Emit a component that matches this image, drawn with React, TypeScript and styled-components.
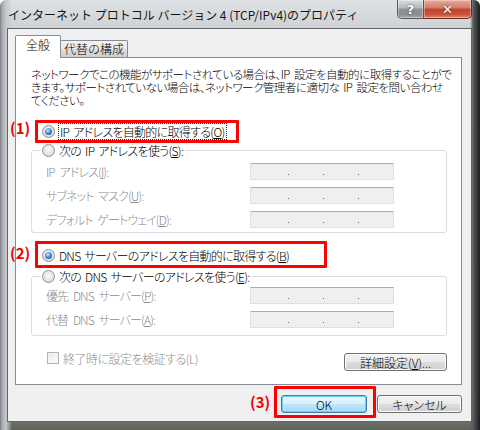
import React from 'react';
import styled, { createGlobalStyle } from 'styled-components';

const GlobalStyle = createGlobalStyle`
  html, body {
    margin: 0;
    padding: 0;
    background: #fff;
  }
  body {
    font-family: "Noto Sans CJK JP", "Liberation Sans", sans-serif;
    font-size: 12px;
    font-weight: 300;
    color: #000;
  }
  * {
    box-sizing: border-box;
  }
`;

const Window = styled.div`
  width: 480px;
  height: 430px;
  display: flex;
  flex-direction: column;
  padding: 0 8px 8px 7px;
  border-radius: 6px 6px 0 0;
  background:
    linear-gradient(to right, #7a7e82 0, #a6aaae 2px, #c6c9cc 6px, rgba(208, 211, 214, 0) 12px),
    linear-gradient(to left, #1e1e1e 0, #3e4042 4px, #5a5c5e 7px, rgba(90, 92, 94, 0) 10px),
    linear-gradient(to bottom, #dfe2e5 0, #cfd2d5 28px, #b8bbbe 380px, #5e6158 100%);
`;

const TitleBar = styled.div`
  height: 28px;
  flex-shrink: 0;
  display: flex;
  align-items: flex-start;
`;

const Title = styled.div`
  padding: 6px 0 0 1px;
  font-size: 12px;
  font-weight: 400;
  color: #151515;
  white-space: nowrap;
`;

const CaptionButtons = styled.div`
  margin-left: auto;
  display: flex;
  height: 19px;
`;

const CaptionButton = styled.div<{ $close?: boolean }>`
  width: ${p => (p.$close ? '48px' : '27px')};
  height: 19px;
  display: flex;
  align-items: center;
  justify-content: center;
  color: #fff;
  font-family: "DejaVu Sans", sans-serif;
  font-weight: bold;
  font-size: 13px;
  text-shadow: 0 0 2px #333;
  border: 1px solid ${p => (p.$close ? '#6b2a20' : '#55595d')};
  border-top: none;
  border-left: ${p => (p.$close ? 'none' : '1px solid #55595d')};
  border-radius: ${p => (p.$close ? '0 0 5px 0' : '0 0 0 5px')};
  background: ${p =>
    p.$close
      ? 'linear-gradient(to bottom, #e9a99b 0, #d47a66 45%, #c1452b 50%, #c9513a 80%, #e08a6f 100%)'
      : 'linear-gradient(to bottom, #d9dbdd 0, #b5b8bb 45%, #8e9195 50%, #8a8d90 80%, #a9acaf 100%)'};
  box-shadow: inset 0 0 0 1px rgba(255, 255, 255, 0.35);
`;

const Client = styled.div`
  flex: 1;
  display: flex;
  flex-direction: column;
  background: #f0f0f0;
  border: 1px solid #62666a;
  padding: 6px 9px 0 7px;
`;

const TabRow = styled.div`
  display: flex;
  align-items: flex-end;
  height: 23px;
  margin-bottom: -1px;
  position: relative;
  z-index: 1;
`;

const Tab = styled.div<{ $active?: boolean }>`
  height: ${p => (p.$active ? '23px' : '17px')};
  margin-bottom: ${p => (p.$active ? '0' : '1px')};
  margin-left: ${p => (p.$active ? '0' : '-1px')};
  padding: ${p => (p.$active ? '1px 10px 0' : '0 3px')};
  display: flex;
  align-items: ${p => (p.$active ? 'flex-start' : 'center')};
  border: 1px solid #898c95;
  border-bottom: none;
  border-radius: 2px 2px 0 0;
  background: ${p =>
    p.$active ? '#fff' : 'linear-gradient(to bottom, #f2f2f2 0, #ebebeb 50%, #dddddd 51%, #cfcfcf 100%)'};
  font-size: 12px;
  line-height: 16px;
  white-space: nowrap;
`;

const Panel = styled.div`
  background: #fff;
  border: 1px solid #898c95;
  padding: 10px 14px 13px 15px;
  display: flex;
  flex-direction: column;
`;

const Description = styled.p`
  margin: 0;
  font-size: 11.5px;
  line-height: 13px;
  letter-spacing: -0.5px;
  word-spacing: 2px;
  font-feature-settings: "palt" 1;
  white-space: nowrap;
`;

const RadioRow = styled.div<{ $indent?: number; $top?: number }>`
  position: relative;
  display: flex;
  align-items: center;
  gap: 4px;
  height: 18px;
  padding-left: ${p => p.$indent ?? 0}px;
  margin-top: ${p => p.$top ?? 0}px;
  letter-spacing: -0.7px;
  word-spacing: 2px;
  font-feature-settings: "palt" 1;
  white-space: nowrap;
`;

const RadioDot = styled.span<{ $on?: boolean }>`
  width: 13px;
  height: 13px;
  flex-shrink: 0;
  border-radius: 50%;
  border: 1px solid #8d8f91;
  background: radial-gradient(circle at 50% 40%, #fbfbfb 0, #e4e4e4 55%, #cdcdcd 100%);
  display: inline-flex;
  align-items: center;
  justify-content: center;

  &::after {
    content: '';
    display: ${p => (p.$on ? 'block' : 'none')};
    width: 7px;
    height: 7px;
    border-radius: 50%;
    background: radial-gradient(circle at 40% 35%, #c4ecff 0, #3f93dc 45%, #0d3f8c 100%);
  }
`;

const FocusLabel = styled.span`
  outline: 1px dotted #222;
  padding: 0 1px;
  line-height: 15px;
`;

const Group = styled.fieldset<{ $top?: number; $bottom?: number }>`
  margin: ${p => p.$top ?? 0}px 0 0 0;
  padding: 0 0 ${p => p.$bottom ?? 4}px 0;
  border: 1px solid #d5dfe5;
  border-radius: 3px;
  min-width: 0;
`;

const Legend = styled.legend`
  margin-left: 9px;
  padding: 0 2px 0 1px;
`;

const FieldRow = styled.div<{ $top: number }>`
  display: flex;
  align-items: center;
  height: 17px;
  margin-top: ${p => p.$top}px;
  padding-left: 14px;
`;

const FieldLabel = styled.span`
  width: 204px;
  color: #8d8d8d;
  letter-spacing: -0.9px;
  word-spacing: 3px;
  font-feature-settings: "palt" 1;
  white-space: nowrap;
`;

const IpBox = styled.div`
  width: 144px;
  height: 17px;
  display: flex;
  align-items: flex-end;
  padding: 0 0 4px 37px;
  background: #efefef;
  border: 1px solid #dcdfe3;
  border-top-color: #abadb3;
`;

const IpDot = styled.span`
  width: 1px;
  height: 1px;
  margin-right: 34px;
  background: #6d6d6d;
`;

const BottomRow = styled.div`
  display: flex;
  align-items: center;
  justify-content: space-between;
  height: 18px;
  margin-top: 17px;
`;

const CheckItem = styled.div`
  display: flex;
  align-items: center;
  gap: 4px;
  padding-left: 16px;
  margin-bottom: 8px;
  color: #8d8d8d;
  letter-spacing: -0.5px;
  font-feature-settings: "palt" 1;
  white-space: nowrap;
`;

const CheckBox = styled.span`
  width: 12px;
  height: 12px;
  border: 1px solid #b4b4b4;
  background: linear-gradient(135deg, #e6e6e6 0, #f6f6f6 60%, #fdfdfd 100%);
  box-shadow: inset 0 0 0 1px #f4f4f4;
`;

const Button = styled.div<{ $w: number; $default?: boolean }>`
  position: relative;
  width: ${p => p.$w}px;
  height: 18px;
  display: flex;
  align-items: center;
  justify-content: center;
  font-size: 12px;
  font-feature-settings: "palt" 1;
  white-space: nowrap;
  border-radius: 3px;
  border: 1px solid ${p => (p.$default ? '#3c7fb1' : '#707070')};
  background: ${p =>
    p.$default
      ? 'linear-gradient(to bottom, #eaf6fd 0, #d9f0fc 50%, #bee6fd 51%, #a7d9f5 100%)'
      : 'linear-gradient(to bottom, #f2f2f2 0, #ebebeb 50%, #dddddd 51%, #cfcfcf 100%)'};
  box-shadow: inset 0 0 0 1px ${p => (p.$default ? '#6ccff7' : '#fcfcfc')};
`;

const Footer = styled.div`
  display: flex;
  justify-content: flex-end;
  gap: 10px;
  padding-top: 10px;
`;

/* red annotation frames laid over the captured dialog */
const RedFrame = styled.div<{ $top: number; $left: number; $w: number; $h: number }>`
  position: absolute;
  top: ${p => p.$top}px;
  left: ${p => p.$left}px;
  width: ${p => p.$w}px;
  height: ${p => p.$h}px;
  border: 3px solid #ff0000;
  border-radius: 1px;
  pointer-events: none;
`;

const Tag = styled.span<{ $top: number; $left: number }>`
  position: absolute;
  top: ${p => p.$top}px;
  left: ${p => p.$left}px;
  color: #f20000;
  font-weight: bold;
  font-size: 15px;
  line-height: 15px;
  letter-spacing: 0;
  word-spacing: 0;
  white-space: nowrap;
`;

function IpField() {
  return (
    <IpBox>
      <IpDot />
      <IpDot />
      <IpDot />
    </IpBox>
  );
}

export default function App() {
  return (
    <>
      <GlobalStyle />
      <Window>
        <TitleBar>
          <Title>インターネット プロトコル バージョン 4 (TCP/IPv4)のプロパティ</Title>
          <CaptionButtons>
            <CaptionButton>?</CaptionButton>
            <CaptionButton $close>✕</CaptionButton>
          </CaptionButtons>
        </TitleBar>
        <Client>
          <TabRow>
            <Tab $active>全般</Tab>
            <Tab>代替の構成</Tab>
          </TabRow>
          <Panel>
            <Description>
              ネットワークでこの機能がサポートされている場合は、IP 設定を自動的に取得することがで
              <br />
              きます。サポートされていない場合は、ネットワーク管理者に適切な IP 設定を問い合わせ
              <br />
              てください。
            </Description>

            <RadioRow $indent={11} $top={15}>
              <RadioDot $on />
              <FocusLabel>
                IP アドレスを自動的に取得する(<u>O</u>)
              </FocusLabel>
              <RedFrame $top={-2} $left={4} $w={204} $h={23} />
              <Tag $top={-2} $left={-21}>(1)</Tag>
            </RadioRow>

            <Group $top={1} $bottom={4}>
              <Legend>
                <RadioRow>
                  <RadioDot />
                  <span>
                    次の IP アドレスを使う(<u>S</u>):
                  </span>
                </RadioRow>
              </Legend>
              <FieldRow $top={4}>
                <FieldLabel>
                  IP アドレス(<u>I</u>):
                </FieldLabel>
                <IpField />
              </FieldRow>
              <FieldRow $top={7}>
                <FieldLabel>
                  サブネット マスク(<u>U</u>):
                </FieldLabel>
                <IpField />
              </FieldRow>
              <FieldRow $top={7}>
                <FieldLabel>
                  デフォルト ゲートウェイ(<u>D</u>):
                </FieldLabel>
                <IpField />
              </FieldRow>
            </Group>

            <RadioRow $indent={11} $top={13}>
              <RadioDot $on />
              <span>
                DNS サーバーのアドレスを自動的に取得する(<u>B</u>)
              </span>
              <RedFrame $top={-5} $left={4} $w={292} $h={27} />
              <Tag $top={-1} $left={-21}>(2)</Tag>
            </RadioRow>

            <Group $top={3} $bottom={7}>
              <Legend>
                <RadioRow>
                  <RadioDot />
                  <span>
                    次の DNS サーバーのアドレスを使う(<u>E</u>):
                  </span>
                </RadioRow>
              </Legend>
              <FieldRow $top={2}>
                <FieldLabel>
                  優先 DNS サーバー(<u>P</u>):
                </FieldLabel>
                <IpField />
              </FieldRow>
              <FieldRow $top={7}>
                <FieldLabel>
                  代替 DNS サーバー(<u>A</u>):
                </FieldLabel>
                <IpField />
              </FieldRow>
            </Group>

            <BottomRow>
              <CheckItem>
                <CheckBox />
                <span>終了時に設定を検証する(L)</span>
              </CheckItem>
              <Button $w={103}>
                詳細設定(<u>V</u>)...
              </Button>
            </BottomRow>
          </Panel>
          <Footer>
            <Button $w={86} $default>
              OK
              <RedFrame $top={-10} $left={-8} $w={102} $h={32} />
              <Tag $top={-2} $left={-32}>(3)</Tag>
            </Button>
            <Button $w={85}>キャンセル</Button>
          </Footer>
        </Client>
      </Window>
    </>
  );
}
